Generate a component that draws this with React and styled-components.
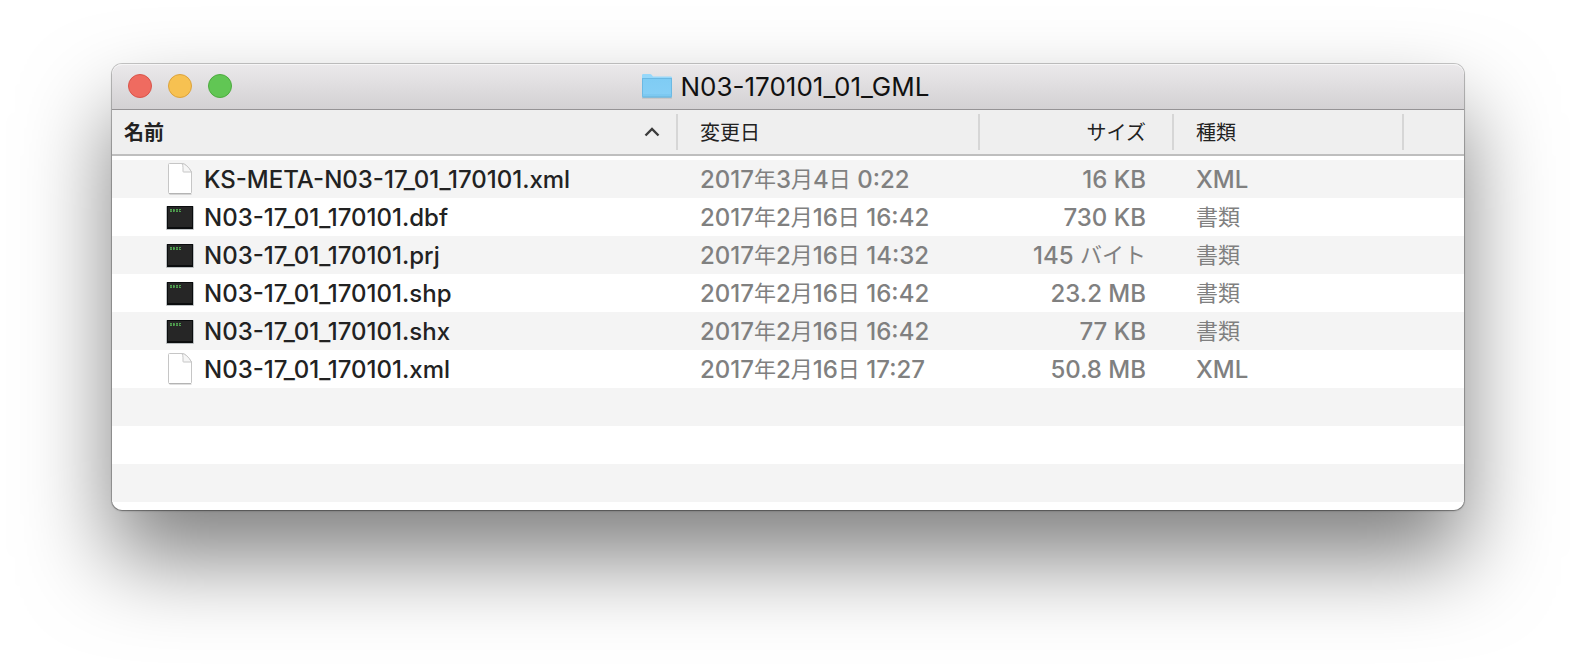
import React from 'react';
import styled, { createGlobalStyle } from 'styled-components';

const GlobalStyle = createGlobalStyle`
  * {
    box-sizing: border-box;
  }

  body {
    margin: 0;
    background: #fff;
    font-family: Inter, "Noto Sans CJK JP", sans-serif;
  }
`

const Desktop = styled.main`
  min-height: 100vh;
  padding: 64px 112px 160px;
  overflow: hidden;
`

const Window = styled.section`
  border-radius: 10px;
  background: #fff;
  box-shadow:
    0 0 0 1px rgba(0, 0, 0, 0.2),
    0 1px 2px rgba(0, 0, 0, 0.3),
    0 48px 88px rgba(0, 0, 0, 0.5);
`

const TitleBar = styled.header`
  display: grid;
  grid-template-columns: 1fr auto 1fr;
  align-items: center;
  height: 46px;
  padding: 0 16px 2px;
  border-bottom: 1px solid #959395;
  border-radius: 10px 10px 0 0;
  background: linear-gradient(#ebe9eb, #d3d1d3);
  box-shadow: inset 0 1px 0 #f6f5f6;
`

const Lights = styled.div`
  display: flex;
  gap: 16px;
`

const Light = styled.button`
  width: 24px;
  height: 24px;
  padding: 0;
  border: 1px solid ${props => props.$edge};
  border-radius: 50%;
  background: ${props => props.$color};
`

const Title = styled.h1`
  display: flex;
  align-items: center;
  gap: 8px;
  margin: 0;
  padding-right: 6px;
  font-size: 26px;
  font-weight: 400;
  line-height: 32px;
  color: #111;
  white-space: nowrap;
`

const Label = styled.span`
  padding-top: 2px;
`

const Files = styled.table`
  width: 100%;
  padding-bottom: 8px;
  border-spacing: 0;
  table-layout: fixed;
`

const Column = styled.col`
  width: ${props => props.$width};
`

const HeadCell = styled.th`
  height: 46px;
  padding: 4px 0;
  border-bottom: 2px solid #bebebe;
  background: #efefef;
`

const SortButton = styled.button`
  display: flex;
  align-items: center;
  justify-content: ${props => props.$justify || 'flex-start'};
  width: 100%;
  height: 36px;
  padding: 2px ${props => props.$right || '16px'} 0 ${props => props.$left || '22px'};
  border: 0;
  border-right: 2px solid #d6d6d6;
  background: none;
  font-family: inherit;
  font-size: 20px;
  font-weight: ${props => (props.$active ? 700 : 400)};
  line-height: 34px;
  color: #222;
`

const Rows = styled.tbody`
  &::before {
    content: '';
    display: block;
    height: 4px;
  }
`

const Row = styled.tr`
  height: 38px;

  &:nth-child(odd) {
    background: #f4f4f4;
  }
`

const Cell = styled.td`
  height: 38px;
  padding: 2px 28px 0 22px;
  font-size: 24px;
  font-weight: 500;
  line-height: 36px;
  text-align: ${props => props.$align || 'left'};
  color: #808080;
  white-space: nowrap;
`

const NameCell = styled(Cell)`
  padding: 0 16px 0 52px;
  color: #222;
`

const FileName = styled.div`
  display: flex;
  align-items: center;
  gap: 8px;
  height: 38px;
`

const Kana = styled.span`
  font-size: 22px;
  font-weight: 400;
  line-height: 1;
  vertical-align: 1px;
`

const FolderIcon = () => (
  <svg width="32" height="32" viewBox="0 1 32 32" aria-hidden="true">
    <defs>
      <linearGradient id="folder" x1="0" y1="0" x2="0" y2="1">
        <stop offset="0" stopColor="#7fccf4" />
        <stop offset="1" stopColor="#86cff6" />
      </linearGradient>
    </defs>
    <path d="M1 28.500h30v1H1z" fill="#000" opacity=".15" />
    <path d="M1 6.200Q1 5 2.200 5H9q1 0 1.600.8L12 7.400h17.800Q31 7.400 31 8.600V27H1z" fill="#97d8fa" />
    <path d="M1 9.500h30v17.800q0 1.200-1.200 1.200H2.200Q1 28.500 1 27.300z" fill="url(#folder)" />
    <path d="M1 9.500h30M1.500 9.500v18M30.500 9.500v18" stroke="#6bb9e3" fill="none" />
    <path d="M1.500 26h29" stroke="#74c3ec" />
    <path d="M1.500 28h29" stroke="#60acd4" />
  </svg>
)

const PageIcon = () => (
  <svg width="32" height="32" viewBox="0 0 32 32" aria-hidden="true">
    <path d="M5.500 31.500h22" stroke="#000" opacity=".12" />
    <path d="M4.500 1.500q0-1 1-1H18q4 0 9.500 8.500v20.500q0 1-1 1h-21q-1 0-1-1z" fill="#fff" stroke="#c6c6c6" />
    <path d="M18 .5q1 2 1 4v4q0 .5.500.500h8Q23 1 18 .5z" fill="#f6f6f6" stroke="#c6c6c6" />
    <path d="M5 30.500h22" stroke="#b4b4b4" />
  </svg>
)

const ExecIcon = () => (
  <svg width="32" height="32" viewBox="0 0 32 32" aria-hidden="true">
    <rect x="2" y="5" width="28" height="24" rx="1" fill="#7d868a" opacity=".5" />
    <rect x="3" y="5" width="26" height="23" fill="#0b0d0e" />
    <rect x="4" y="6" width="24" height="20" fill="#262626" />
    <g fill="#4fa04f">
      <path d="M6 8h2v1H6zM6 10h2v1H6zM9 8h1v3H9zM10 9h1v1h-1zM12 8h2v1h-2zM12 10h2v1h-2zM15 8h2v1h-2zM15 10h2v1h-2z" />
      <path d="M6 9h2v1H6zM12 9h2v1h-2zM15 9h1v1h-1zM10 8h1v3h-1z" opacity=".7" />
    </g>
  </svg>
)

const SortArrow = () => (
  <svg width="16" height="12" viewBox="0 0 16 12" aria-hidden="true">
    <path d="M1.500 8.500 8 2l6.500 6.500" fill="none" stroke="#3c3c3c" strokeWidth="2.400" />
  </svg>
)

const files = [
  { name: 'KS-META-N03-17_01_170101.xml', date: '2017年3月4日 0:22', size: '16 KB', kind: 'XML' },
  { name: 'N03-17_01_170101.dbf', date: '2017年2月16日 16:42', size: '730 KB', kind: '書類' },
  { name: 'N03-17_01_170101.prj', date: '2017年2月16日 14:32', size: '145 バイト', kind: '書類' },
  { name: 'N03-17_01_170101.shp', date: '2017年2月16日 16:42', size: '23.2 MB', kind: '書類' },
  { name: 'N03-17_01_170101.shx', date: '2017年2月16日 16:42', size: '77 KB', kind: '書類' },
  { name: 'N03-17_01_170101.xml', date: '2017年2月16日 17:27', size: '50.8 MB', kind: 'XML' },
]

// Japanese runs are set a little smaller than the latin ones
const mixed = (text) =>
  text.split(/([^\x00-\x7f]+)/).map((part, i) => (i % 2 ? <Kana key={i}>{part}</Kana> : part))

const App = () => {
  return (
    <>
      <GlobalStyle />
      <Desktop>
        <Window>
          <TitleBar>
            <Lights>
              <Light aria-label="閉じる" $color="#ef6b60" $edge="#d9544a" />
              <Light aria-label="しまう" $color="#f7c151" $edge="#dca33c" />
              <Light aria-label="拡大" $color="#61c654" $edge="#4dab3f" />
            </Lights>
            <Title>
              <FolderIcon />
              <Label>N03-170101_01_GML</Label>
            </Title>
          </TitleBar>
          <Files>
            <colgroup>
              <Column />
              <Column $width="302px" />
              <Column $width="194px" />
              <Column $width="230px" />
              <Column $width="60px" />
            </colgroup>
            <thead>
              <tr>
                <HeadCell aria-sort="ascending">
                  <SortButton $active $justify="space-between" $left="12px">
                    名前
                    <SortArrow />
                  </SortButton>
                </HeadCell>
                <HeadCell><SortButton>変更日</SortButton></HeadCell>
                <HeadCell><SortButton $justify="flex-end" $right="26px">サイズ</SortButton></HeadCell>
                <HeadCell><SortButton>種類</SortButton></HeadCell>
                <HeadCell as="td" />
              </tr>
            </thead>
            <Rows>
              {files.map((file) => (
                <Row key={file.name}>
                  <NameCell>
                    <FileName>
                      {file.kind === 'XML' ? <PageIcon /> : <ExecIcon />}
                      <Label>{file.name}</Label>
                    </FileName>
                  </NameCell>
                  <Cell>{mixed(file.date)}</Cell>
                  <Cell $align="right">{mixed(file.size)}</Cell>
                  <Cell>{mixed(file.kind)}</Cell>
                  <Cell />
                </Row>
              ))}
              {[0, 1, 2].map((i) => (
                <Row key={i} aria-hidden="true">
                  <Cell colSpan={5} />
                </Row>
              ))}
            </Rows>
          </Files>
        </Window>
      </Desktop>
    </>
  )
}

export default App
